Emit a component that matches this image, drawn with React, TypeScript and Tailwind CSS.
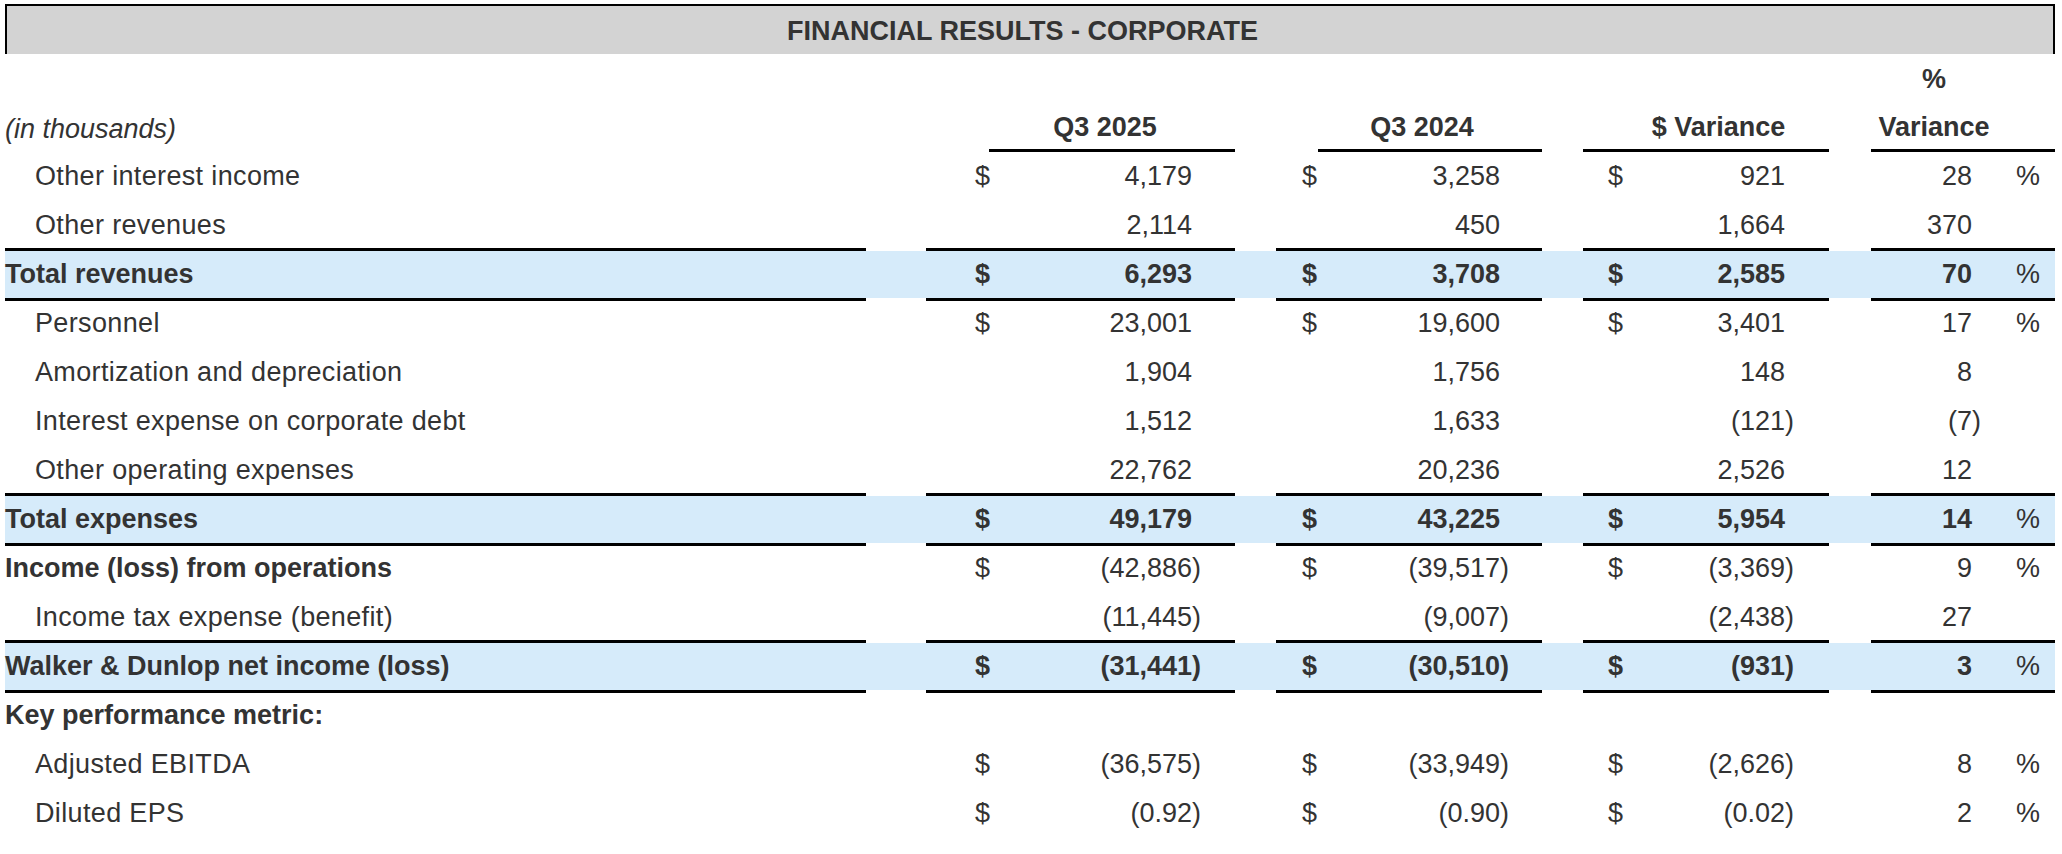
type Row = {
  label: string
  indent?: boolean
  bold?: boolean
  total?: boolean
  dollar?: boolean
  pct?: boolean
  values?: [string, string, string, string]
}

const rows: Row[] = [
  { label: 'Other interest income', indent: true, dollar: true, pct: true, values: ['4,179', '3,258', '921', '28'] },
  { label: 'Other revenues', indent: true, values: ['2,114', '450', '1,664', '370'] },
  { label: 'Total revenues', bold: true, total: true, dollar: true, pct: true, values: ['6,293', '3,708', '2,585', '70'] },
  { label: 'Personnel', indent: true, dollar: true, pct: true, values: ['23,001', '19,600', '3,401', '17'] },
  { label: 'Amortization and depreciation', indent: true, values: ['1,904', '1,756', '148', '8'] },
  { label: 'Interest expense on corporate debt', indent: true, values: ['1,512', '1,633', '(121)', '(7)'] },
  { label: 'Other operating expenses', indent: true, values: ['22,762', '20,236', '2,526', '12'] },
  { label: 'Total expenses', bold: true, total: true, dollar: true, pct: true, values: ['49,179', '43,225', '5,954', '14'] },
  { label: 'Income (loss) from operations', bold: true, dollar: true, pct: true, values: ['(42,886)', '(39,517)', '(3,369)', '9'] },
  { label: 'Income tax expense (benefit)', indent: true, values: ['(11,445)', '(9,007)', '(2,438)', '27'] },
  { label: 'Walker & Dunlop net income (loss)', bold: true, total: true, dollar: true, pct: true, values: ['(31,441)', '(30,510)', '(931)', '3'] },
  { label: 'Key performance metric:', bold: true },
  { label: 'Adjusted EBITDA', indent: true, dollar: true, pct: true, values: ['(36,575)', '(33,949)', '(2,626)', '8'] },
  { label: 'Diluted EPS', indent: true, dollar: true, pct: true, values: ['(0.92)', '(0.90)', '(0.02)', '2'] },
]

const cols = 'grid grid-cols-[861px_60px_309px_41px_266px_41px_246px_42px_184px]'
const line = '-my-[3px] border-y-[3px] border-black'

// offsets of the $ sign and the room left after the number, per money column
const money = [
  { lead: 'ml-[49px]', tail: 'w-[43px]' },
  { lead: 'ml-[26px]', tail: 'w-[42px]' },
  { lead: 'ml-[25px]', tail: 'w-[44px]' },
]

const split = (v: string) => (v.endsWith(')') ? [v.slice(0, -1), ')'] : [v, ''])

const Money = ({ value, dollar, bold, lead, tail, edge }: {
  value: string
  dollar?: boolean
  bold?: boolean
  lead: string
  tail: string
  edge: string
}) => {
  const [core, paren] = split(value)
  return (
    <div className={`flex items-center ${bold ? 'font-bold' : ''} ${edge}`}>
      <span className={`${lead} w-[16px]`}>{dollar ? '$' : ''}</span>
      <span className="flex-1 text-right">{core}</span>
      <span className={tail}>{paren}</span>
    </div>
  )
}

const App = () => {
  return (
    <div className="min-h-screen bg-white pt-[4px] pl-[5px] text-[#333333] text-[27px] leading-none font-['Liberation_Sans',Arial,sans-serif]">
      <div className="w-[2050px]">
        <div className="h-[50px] border-t-2 border-x-2 border-black bg-[#d3d3d3] flex items-center justify-center pr-[15px] pt-[2px] font-bold">
          FINANCIAL RESULTS - CORPORATE
        </div>

        <div className={`${cols} h-[50px]`}>
          <div className="col-start-9 flex items-center justify-center pr-[58px] font-bold">%</div>
        </div>

        <div className={`${cols} h-[48px] font-bold`}>
          <div className="flex items-center pt-[2px] italic font-normal">(in thousands)</div>
          <div />
          <div className="flex flex-col">
            <div className="flex-1 flex items-center justify-center pt-[2px] pl-[49px]">Q3 2025</div>
            <div className="ml-[63px] h-[3px] bg-black" />
          </div>
          <div />
          <div className="flex flex-col">
            <div className="flex-1 flex items-center justify-center pt-[2px] pl-[26px]">Q3 2024</div>
            <div className="ml-[42px] h-[3px] bg-black" />
          </div>
          <div />
          <div className="flex flex-col">
            <div className="flex-1 flex items-center justify-center pt-[2px] pl-[25px]">$ Variance</div>
            <div className="h-[3px] bg-black" />
          </div>
          <div />
          <div className="flex flex-col">
            <div className="flex-1 flex items-center justify-center pt-[2px] pr-[58px]">Variance</div>
            <div className="h-[3px] bg-black" />
          </div>
        </div>

        {rows.map((r) => {
          const edge = r.total ? line : ''
          const [pctCore, pctParen] = r.values ? split(r.values[3]) : ['', '']
          return (
            <div
              key={r.label}
              className={`${cols} ${r.total ? 'h-[53px] -my-[2px] border-y-[3px] border-transparent bg-[#d6ebfa] bg-clip-padding' : 'h-[49px]'}`}
            >
              <div className={`flex items-center ${r.indent ? 'pl-[30px]' : ''} ${r.bold ? 'font-bold' : 'tracking-[0.35px]'} ${edge}`}>
                {r.label}
              </div>
              <div />
              {r.values ? (
                <>
                  <Money value={r.values[0]} dollar={r.dollar} bold={r.total} edge={edge} {...money[0]} />
                  <div />
                  <Money value={r.values[1]} dollar={r.dollar} bold={r.total} edge={edge} {...money[1]} />
                  <div />
                  <Money value={r.values[2]} dollar={r.dollar} bold={r.total} edge={edge} {...money[2]} />
                  <div />
                  <div className={`flex items-center ${edge}`}>
                    <span className={`w-[101px] text-right ${r.total ? 'font-bold' : ''}`}>{pctCore}</span>
                    <span className="w-[44px]">{pctParen}</span>
                    <span>{r.pct ? '%' : ''}</span>
                  </div>
                </>
              ) : null}
            </div>
          )
        })}
      </div>
    </div>
  )
}

export default App
